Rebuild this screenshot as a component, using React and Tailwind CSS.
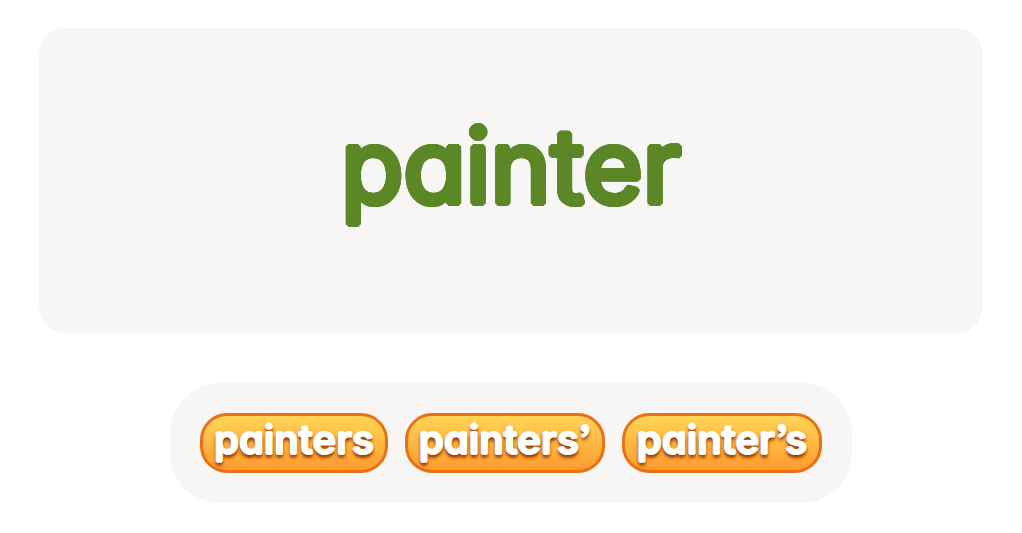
const choices = [
  { label: 'painters', width: 'min-w-[188px]' },
  { label: 'painters’', width: 'min-w-[200px]' },
  { label: 'painter’s', width: 'min-w-[200px]' },
];

function Choice({ label, width }) {
  return (
    <button
      type="button"
      className={`${width} flex h-[60px] items-center justify-center rounded-[27px] border-[3px] border-[#e87017] bg-linear-to-b from-[#ffd558] to-[#ff9b2d] pb-1.5 text-[40px] leading-none font-semibold text-white [text-shadow:1px_0_white,-1px_0_white,0_1px_white,0_-1px_white,0_3px_3px_#9c3d00,0_3px_4px_#9c3d00]`}
    >
      {label}
    </button>
  );
}

export default function App() {
  return (
    <main className="flex flex-col items-center gap-[50px] bg-white px-[39px] pt-7 pb-[30px] font-['Inter',sans-serif] [font-feature-settings:'cv11','ss03']">
      <section className="flex w-full items-center justify-center rounded-[26px] bg-[#f7f6f5] pt-[87px] pb-[116px]">
        <h1 className="text-[102px] leading-none font-normal text-[#5c8727] [text-shadow:3px_0,-3px_0,0_3px,0_-3px,2px_2px,2px_-2px,-2px_2px,-2px_-2px,3px_1px,3px_-1px,-3px_1px,-3px_-1px,1px_3px,1px_-3px,-1px_3px,-1px_-3px]">
          painter
        </h1>
      </section>
      <div className="flex justify-center gap-[17px] rounded-[50px] bg-[#f7f6f5] p-[30px]">
        {choices.map((choice) => (
          <Choice key={choice.label} {...choice} />
        ))}
      </div>
    </main>
  );
}
